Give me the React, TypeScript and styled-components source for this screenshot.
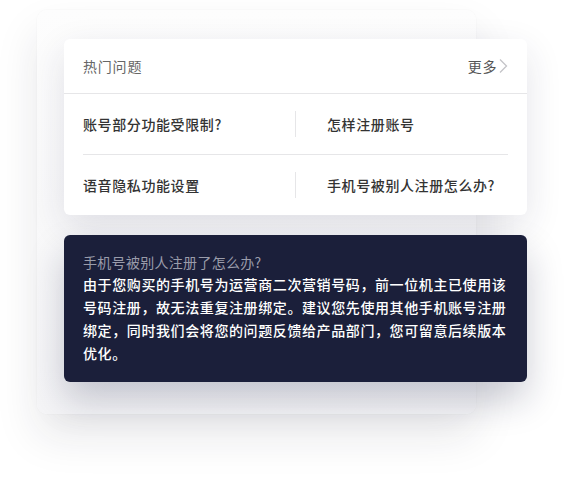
import React from "react";
import styled, { createGlobalStyle } from "styled-components";

const Global = createGlobalStyle`
  html, body { margin: 0; padding: 0; background: #ffffff; }
  body { font-family: "Noto Sans CJK SC", "Noto Sans", sans-serif; }
`;

const Page = styled.div`
  width: 582px;
  height: 480px;
  padding: 10px 0 0 37px;
  box-sizing: border-box;
  overflow: hidden;
`;

const Panel = styled.div`
  width: 439px;
  height: 404px;
  box-sizing: border-box;
  padding: 29px 0 0 27px;
  border-radius: 10px;
  background: linear-gradient(180deg, #fdfdfd 0%, #f5f5f7 100%);
  box-shadow: 0 22px 44px rgba(30, 30, 50, 0.1), 0 0 2px rgba(30, 30, 50, 0.05);
  display: flex;
  flex-direction: column;
  gap: 20px;
`;

const Card = styled.div`
  width: 463px;
  background: #ffffff;
  border-radius: 6px;
  box-shadow: 0 12px 36px rgba(30, 35, 70, 0.12);
`;

const Header = styled.div`
  height: 55px;
  box-sizing: border-box;
  padding: 0 19px;
  display: flex;
  align-items: center;
  justify-content: space-between;
  border-bottom: 1px solid #e6e6e8;
`;

const HeaderTitle = styled.span`
  font-size: 14px;
  letter-spacing: 0.8px;
  color: #666666;
`;

const More = styled.span`
  display: flex;
  align-items: center;
  gap: 1px;
  font-size: 14px;
  letter-spacing: 0.6px;
  color: #555555;
`;

const Row = styled.div<{ $last?: boolean }>`
  height: 60px;
  margin: 0 19px;
  display: grid;
  grid-template-columns: 1fr 1px 1fr;
  align-items: center;
  border-bottom: ${(p) => (p.$last ? "none" : "1px solid #e6e6e8")};
`;

const Question = styled.span<{ $right?: boolean }>`
  font-size: 14px;
  letter-spacing: 0.6px;
  font-weight: 500;
  color: #333333;
  padding-left: ${(p) => (p.$right ? "31px" : "0")};
`;

const VDivider = styled.span`
  width: 1px;
  height: 26px;
  background: #e6e6e8;
`;

const AnswerCard = styled.div`
  width: 463px;
  box-sizing: border-box;
  padding: 16px 17px 17px 19px;
  background: #1b1f3a;
  border-radius: 6px;
  box-shadow: 0 18px 36px rgba(20, 25, 60, 0.22);
`;

const AnswerTitle = styled.div`
  font-size: 14px;
  line-height: 22px;
  letter-spacing: 0.3px;
  color: #9a9caa;
`;

const AnswerBody = styled.div`
  font-size: 14px;
  line-height: 23px;
  letter-spacing: 0.6px;
  font-weight: 500;
  color: #ffffff;
`;

const Chevron = () => (
  <svg width="10" height="16" viewBox="0 0 10 16" fill="none">
    <polyline points="2,1.5 8.5,8 2,14.5" stroke="#c4c4c8" strokeWidth="1.3" />
  </svg>
);

const questions: [string, string][] = [
  ["账号部分功能受限制?", "怎样注册账号"],
  ["语音隐私功能设置", "手机号被别人注册怎么办?"],
];

export default function App() {
  return (
    <>
      <Global />
      <Page>
        <Panel>
          <Card>
            <Header>
              <HeaderTitle>热门问题</HeaderTitle>
              <More>
                更多
                <Chevron />
              </More>
            </Header>
            {questions.map(([a, b], i) => (
              <Row key={i} $last={i === questions.length - 1}>
                <Question>{a}</Question>
                <VDivider />
                <Question $right>{b}</Question>
              </Row>
            ))}
          </Card>
          <AnswerCard>
            <AnswerTitle>手机号被别人注册了怎么办?</AnswerTitle>
            <AnswerBody>
              由于您购买的手机号为运营商二次营销号码，前一位机主已使用该号码注册，故无法重复注册绑定。建议您先使用其他手机账号注册绑定，同时我们会将您的问题反馈给产品部门，您可留意后续版本优化。
            </AnswerBody>
          </AnswerCard>
        </Panel>
      </Page>
    </>
  );
}
